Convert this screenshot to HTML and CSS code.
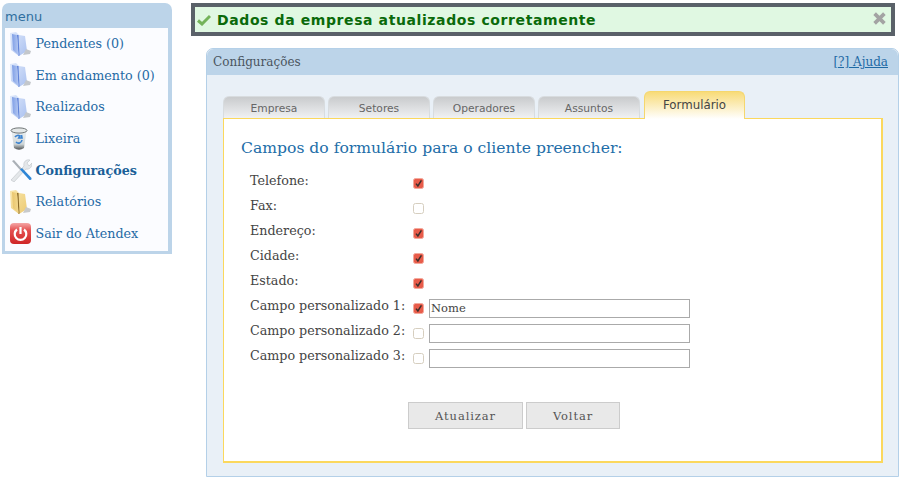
FILE: index.html
```html
<!DOCTYPE html>
<html lang="en">
<head>
  <meta charset="UTF-8">
  <title>Atendex - Configurações</title>
  <link rel="stylesheet" href="styles.css">
</head>
<body>
  <svg class="defs" width="0" height="0">
    <defs>
      <linearGradient id="blueBack" x1="0" y1="0" x2="1" y2="0">
        <stop offset="0" stop-color="#7f9fe6"/>
        <stop offset="1" stop-color="#b4c8f2"/>
      </linearGradient>
      <linearGradient id="blueFront" x1="0" y1="0" x2="1" y2="1">
        <stop offset="0" stop-color="#dfe9fb"/>
        <stop offset="1" stop-color="#a9c0f0"/>
      </linearGradient>
      <linearGradient id="yellowBack" x1="0" y1="0" x2="1" y2="0">
        <stop offset="0" stop-color="#e9c56c"/>
        <stop offset="1" stop-color="#f3d98f"/>
      </linearGradient>
      <linearGradient id="yellowFront" x1="0" y1="0" x2="1" y2="1">
        <stop offset="0" stop-color="#f9e7ae"/>
        <stop offset="1" stop-color="#ecca72"/>
      </linearGradient>
      <linearGradient id="binBody" x1="0" y1="0" x2="0" y2="1">
        <stop offset="0" stop-color="#eef2f4"/>
        <stop offset=".7" stop-color="#cfd6d8"/>
        <stop offset="1" stop-color="#4e5254"/>
      </linearGradient>
      <linearGradient id="powerBg" x1="0" y1="0" x2="0" y2="1">
        <stop offset="0" stop-color="#f4a6a6"/>
        <stop offset=".35" stop-color="#e45050"/>
        <stop offset="1" stop-color="#cf2626"/>
      </linearGradient>
      <symbol id="folderBlue" viewBox="0 0 22 24">
        <path d="M0 1 L6 0 L9 3 L15 4 L17 19 L9 24 L1 18 Z" fill="url(#blueFront)"/>
        <path d="M7 3 L8.5 24 L9.5 23.5 L8.5 3 Z" fill="#5f82d8"/>
        <path d="M2 2 L7 3 L8.5 23 L3 18 Z" fill="url(#blueBack)"/>
        <path d="M16 17 L21 19 L20 22 L13 23 Z" fill="#c3c7cc"/>
      </symbol>
      <symbol id="folderYellow" viewBox="0 0 22 24">
        <path d="M0 1 L6 0 L9 3 L15 4 L17 19 L9 24 L1 18 Z" fill="url(#yellowFront)"/>
        <path d="M7 3 L8.5 24 L9.5 23.5 L8.5 3 Z" fill="#8a6a28"/>
        <path d="M2 2 L7 3 L8.5 23 L3 18 Z" fill="url(#yellowBack)"/>
        <path d="M16 17 L21 19 L20 22 L13 23 Z" fill="#c8cacc"/>
      </symbol>
      <symbol id="check" viewBox="0 0 11 11">
        <rect x=".5" y=".5" width="10" height="10" rx="2" fill="#e85c4a" stroke="#f3a99c"/>
        <path d="M3 5.6 L4.9 8 L8.4 2.4" fill="none" stroke="#3c2e2c" stroke-width="1.5"/>
      </symbol>
      <symbol id="uncheck" viewBox="0 0 11 11">
        <rect x=".5" y=".5" width="10" height="10" rx="2" fill="#fff" stroke="#d6cebf"/>
      </symbol>
    </defs>
  </svg>

  <div class="page">
    <nav class="menu">
      <div class="menu-title">menu</div>
      <ul class="menu-list">
        <li><svg class="ico"><use href="#folderBlue"/></svg><a href="#">Pendentes (0)</a></li>
        <li><svg class="ico"><use href="#folderBlue"/></svg><a href="#">Em andamento (0)</a></li>
        <li><svg class="ico"><use href="#folderBlue"/></svg><a href="#">Realizados</a></li>
        <li>
          <svg class="ico" viewBox="0 0 22 24">
            <path d="M1.5 4 L4 21 Q9 24.5 14 21 L16.5 4 Z" fill="url(#binBody)"/>
            <ellipse cx="9" cy="3.5" rx="8" ry="2.6" fill="#e4e8e8" stroke="#6f7576"/>
            <path d="M5 10 A3.5 3.5 0 0 1 10 9 L8.8 11 L12 11 L11.5 8 M12 13 A3.5 3.5 0 0 1 6 15" fill="none" stroke="#3b83d0" stroke-width="1.6"/>
          </svg>
          <a href="#">Lixeira</a>
        </li>
        <li>
          <svg class="ico" viewBox="0 0 22 24">
            <path d="M2 3 L4 2 L12 11 L10.5 12.5 Z" fill="#aab0b6"/>
            <path d="M1 22 L14 8 C13 4 16 1 20 2 L17 5 L19 8 L22 5 C22.5 9 19 12 16 11 L4 24 Z" fill="#e4e7ea" stroke="#b4babf" stroke-width=".5"/>
            <path d="M10 11.5 L12 10 L21.5 20 Q22 22.5 19.5 22 Z" fill="#2f86d6"/>
          </svg>
          <a href="#" class="current">Configurações</a>
        </li>
        <li><svg class="ico"><use href="#folderYellow"/></svg><a href="#">Relatórios</a></li>
        <li>
          <svg class="ico" viewBox="0 0 22 24">
            <rect x="0" y="2" width="21" height="21" rx="4" fill="url(#powerBg)"/>
            <path d="M7 8.5 A5.8 5.8 0 1 0 14 8.5" fill="none" stroke="#fff" stroke-width="2.2"/>
            <path d="M10.5 6 L10.5 13" stroke="#fff" stroke-width="2.2"/>
          </svg>
          <a href="#">Sair do Atendex</a>
        </li>
      </ul>
    </nav>

    <main class="content">
      <div class="alert">
        <svg class="alert-check" viewBox="0 0 14 12"><path d="M1 6.5 L5 10 L13 2" fill="none" stroke="#74b35a" stroke-width="3"/></svg>
        <span class="alert-text">Dados da empresa atualizados corretamente</span>
        <svg class="alert-close" viewBox="0 0 12 12"><path d="M1.5 1.5 L10.5 10.5 M10.5 1.5 L1.5 10.5" stroke="#a3a3a3" stroke-width="3.4"/></svg>
      </div>

      <section class="panel">
        <header class="panel-head">
          <span>Configurações</span>
          <a href="#">[?] Ajuda</a>
        </header>
        <div class="panel-body">
          <div class="tabs">
            <a class="tab" href="#">Empresa</a>
            <a class="tab" href="#">Setores</a>
            <a class="tab" href="#">Operadores</a>
            <a class="tab tab-last" href="#">Assuntos</a>
            <a class="tab tab-active" href="#">Formulário</a>
          </div>
          <div class="tab-box">
            <h2>Campos do formulário para o cliente preencher:</h2>
            <div class="fields">
              <div class="row"><label>Telefone:</label><svg class="box"><use href="#check"/></svg></div>
              <div class="row"><label>Fax:</label><svg class="box"><use href="#uncheck"/></svg></div>
              <div class="row"><label>Endereço:</label><svg class="box"><use href="#check"/></svg></div>
              <div class="row"><label>Cidade:</label><svg class="box"><use href="#check"/></svg></div>
              <div class="row"><label>Estado:</label><svg class="box"><use href="#check"/></svg></div>
              <div class="row"><label>Campo personalizado 1:</label><svg class="box"><use href="#check"/></svg><input type="text" value="Nome"></div>
              <div class="row"><label>Campo personalizado 2:</label><svg class="box"><use href="#uncheck"/></svg><input type="text"></div>
              <div class="row"><label>Campo personalizado 3:</label><svg class="box"><use href="#uncheck"/></svg><input type="text"></div>
            </div>
            <div class="buttons">
              <button type="button" class="btn-save">Atualizar</button>
              <button type="button" class="btn-back">Voltar</button>
            </div>
          </div>
        </div>
      </section>
    </main>
  </div>
</body>
</html>
```
FILE: styles.css
```css
html, body {
  margin: 0;
  height: 481px;
  overflow: hidden;
}
body {
  background: #fff;
  color: #444;
  font-family: "DejaVu Serif", serif;
  font-size: 12.7px;
}
a {
  color: #1f6aa5;
  text-decoration: none;
}
.defs {
  display: block;
  height: 0;
}
.page {
  display: flex;
  align-items: flex-start;
  padding: 3px 0 0 2px;
}

/* menu */
.menu {
  flex: none;
  width: 170px;
  box-sizing: border-box;
  background: #bcd4e9;
  border-radius: 7px 7px 0 0;
  padding: 0 4px 3px 3px;
}
.menu-title {
  height: 25px;
  line-height: 27px;
  font-family: "DejaVu Sans", sans-serif;
  font-size: 13px;
  color: #2f6f9f;
}
.menu-list {
  list-style: none;
  margin: 0;
  padding: 0;
  background: #fbfcff;
  height: 223px;
  box-sizing: border-box;
}
.menu-list li {
  display: flex;
  align-items: center;
  height: 31.6px;
  padding-left: 5px;
}
.ico {
  flex: none;
  width: 22px;
  height: 24px;
  margin-right: 3.5px;
}
.current {
  color: #1a5f98;
  font-weight: bold;
}

/* content */
.content {
  margin-left: 19px;
  width: 708px;
}
.alert {
  display: flex;
  align-items: center;
  width: 704px;
  height: 33px;
  box-sizing: border-box;
  border: 4px solid #5a6169;
  background: #e0f8e2;
  padding: 0 5px 0 2px;
}
.alert-check {
  flex: none;
  width: 14px;
  height: 12px;
  margin-right: 6px;
}
.alert-text {
  flex: 1;
  font-family: "DejaVu Sans", sans-serif;
  font-weight: bold;
  font-size: 14px;
  letter-spacing: 0.6px;
  color: #0a6a0a;
}
.alert-close {
  flex: none;
  width: 13px;
  height: 13px;
  margin-bottom: 3px;
}

.panel {
  margin: 12px 0 0 15px;
  width: 693px;
  height: 429px;
  box-sizing: border-box;
  border: 1px solid #b4d0e8;
  border-radius: 7px 7px 0 0;
  background: #e9f0f7;
}
.panel-head {
  display: flex;
  justify-content: space-between;
  align-items: center;
  height: 26px;
  padding: 0 10px 0 6px;
  background: #bcd4e9;
  border-radius: 7px 7px 0 0;
  font-size: 12px;
  color: #4a5560;
}
.panel-head a {
  text-decoration: underline;
}
.panel-body {
  padding: 20px 15px 0 16px;
}

/* tabs */
.tabs {
  display: flex;
  align-items: flex-end;
  height: 23px;
}
.tab {
  display: block;
  box-sizing: border-box;
  width: 102px;
  height: 22px;
  margin-right: 3px;
  border: 1px solid #d8dcdf;
  border-bottom: none;
  border-radius: 6px 6px 0 0;
  background: linear-gradient(#c9cbcd, #f0f1f3);
  font-family: "DejaVu Sans", sans-serif;
  font-size: 10.7px;
  line-height: 24px;
  text-align: center;
  color: #666;
}
.tab-last {
  margin-right: 4px;
}
.tab-active {
  position: relative;
  z-index: 1;
  width: 101px;
  height: 28px;
  margin: 0 0 -1px 0;
  border: 1px solid #f5d76e;
  border-bottom: none;
  background: linear-gradient(#f8db78, #fff);
  line-height: 27px;
  font-size: 11.8px;
  color: #444;
}
.tab-box {
  box-sizing: border-box;
  width: 660px;
  height: 345px;
  background: #fff;
  border: 1px solid #fbd85d;
  border-bottom-width: 2px;
  border-right-width: 2px;
  padding: 18px 17px 0 17px;
}
.tab-box h2 {
  margin: 0;
  font-size: 15.6px;
  font-weight: normal;
  line-height: 22px;
  color: #226da8;
}
.fields {
  margin-top: 12px;
  padding-left: 9px;
}
.row {
  display: flex;
  align-items: center;
  height: 25px;
}
.row label {
  width: 163px;
  flex: none;
  margin-bottom: 6px;
}
.box {
  flex: none;
  width: 11px;
  height: 11px;
  margin-right: 5px;
}
.row input {
  width: 261px;
  height: 19px;
  box-sizing: border-box;
  margin: 0;
  padding: 0 1px 1px;
  border: 1px solid #aaa;
  background: #fff;
  font-family: "DejaVu Serif", serif;
  font-size: 11.5px;
  color: #444;
}
.buttons {
  display: flex;
  margin: 31px 0 0 167px;
  gap: 3px;
}
.buttons button {
  box-sizing: border-box;
  height: 27px;
  border: 1px solid #ccc;
  background: #e9e9e9;
  font-family: "DejaVu Serif", serif;
  font-size: 11.5px;
  letter-spacing: 0.9px;
  color: #555;
}
.btn-save {
  width: 115px;
}
.btn-back {
  width: 94px;
}
```
